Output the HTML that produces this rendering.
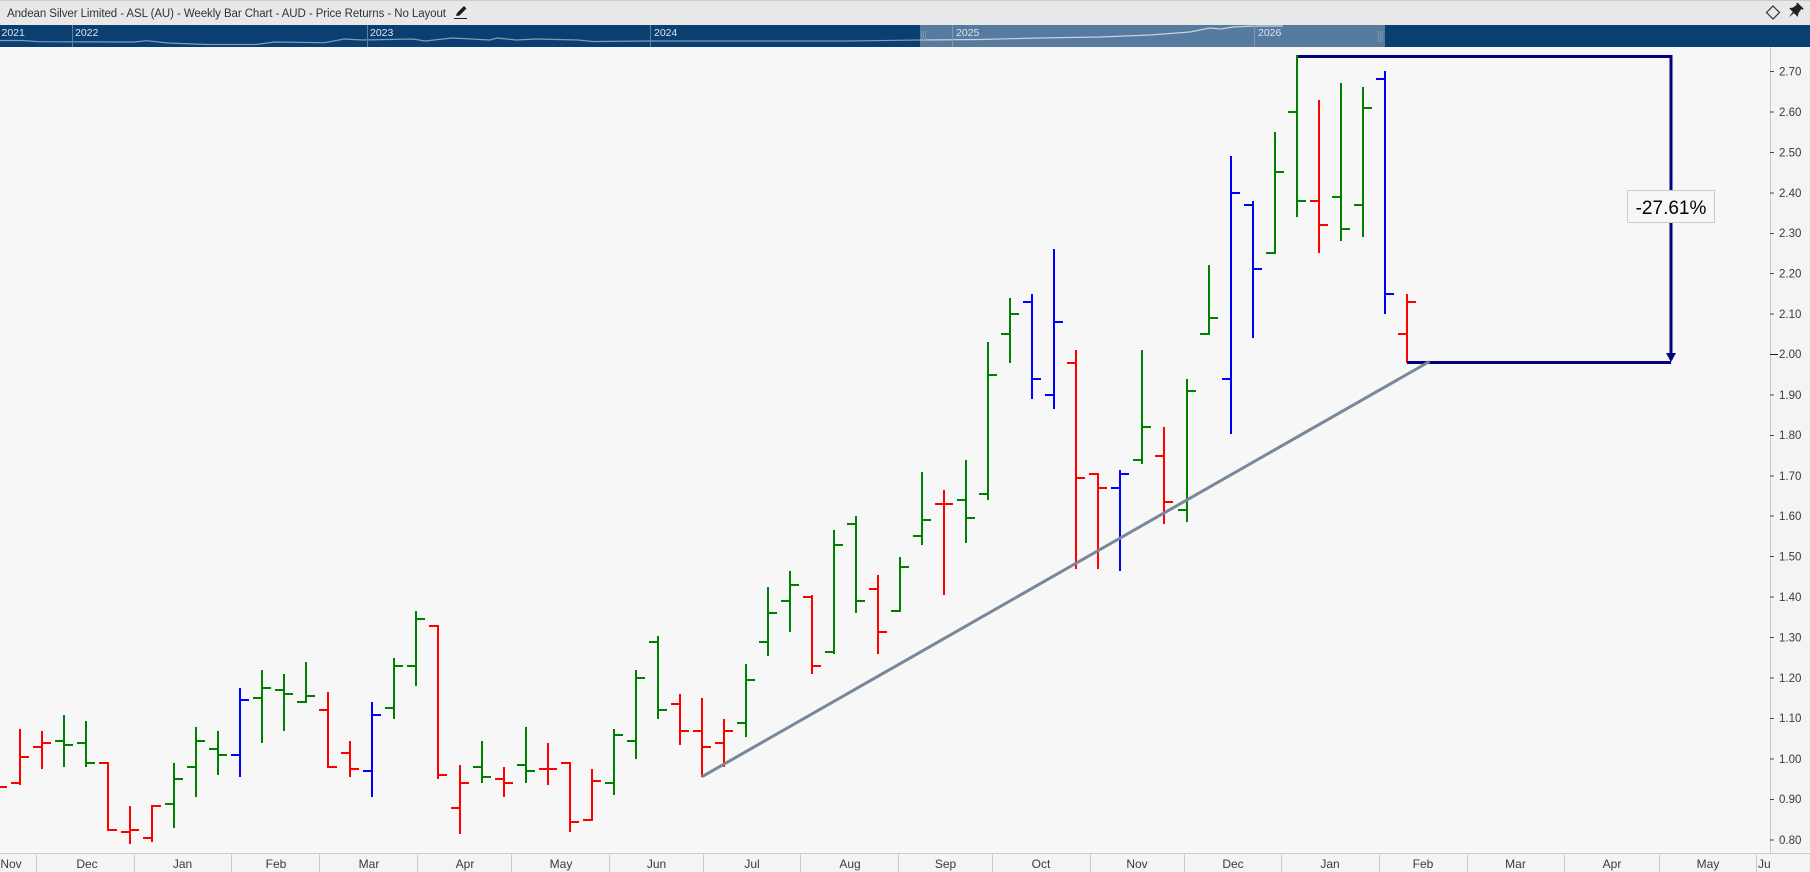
<!DOCTYPE html>
<html lang="en">
<head>
<meta charset="utf-8">
<title>Andean Silver Limited - ASL (AU) - Weekly Bar Chart</title>
<style>
html,body{margin:0;padding:0;width:1810px;height:872px;overflow:hidden;background:#f7f7f7}
svg{display:block}
text{font-family:"Liberation Sans",sans-serif}
.ax{font-size:11.5px;fill:#3a3a3a}
.mo{font-size:12px;fill:#3a3a3a;text-anchor:middle}
.yr{font-size:10.5px;fill:#dbe4ee}
</style>
</head>
<body>
<svg width="1810" height="872" viewBox="0 0 1810 872" xmlns="http://www.w3.org/2000/svg">
<rect width="1810" height="872" fill="#f7f7f7"/>
<!-- header -->
<rect width="1810" height="25" fill="#e8e8e8"/>
<rect width="1810" height="1" fill="#cccccc"/>
<text x="7" y="17" font-size="11.5" fill="#333333" textLength="439" lengthAdjust="spacing">Andean Silver Limited - ASL (AU) - Weekly Bar Chart - AUD - Price Returns - No Layout</text>
<path d="M456 16l1-3 7-7 2.5 2.5-7 7z" fill="#1c1c1c"/>
<rect x="454" y="18" width="13" height="1" fill="#1c1c1c"/>
<polygon points="1773,6 1779.5,12.5 1773,19 1766.5,12.5" fill="none" stroke="#333333" stroke-width="1.2"/>
<g transform="translate(1795 11) rotate(45) scale(1.1)" fill="#222222"><path d="M-4-7H4V-5.5H2.8L3.5-1 5.5 2H-5.5L-3.5-1-2.8-5.5H-4Z"/><path d="M-.8 2L0 8 .8 2Z"/></g>
<!-- navigator -->
<rect y="25" width="1810" height="22" fill="#0b3f72"/>
<rect x="920" y="25" width="465" height="22" fill="#567b9f"/>
<polyline fill="none" stroke="#7d9dbd" stroke-width="1.2" points="0,40.5 23,40.5 38,41.7 134,42 147,40.7 168,43 207,44.5 256,44.5 275,42 325,42.7 344,39 363,40 413,39 425,41 452,38 490,40 497,38 516,40 536,39 578,40 593,41.5 650,41 760,41 850,41 920,40"/>
<polyline fill="none" stroke="#c3d3e3" stroke-width="1.2" points="920,40 980,39.5 1040,38 1100,37 1150,35 1190,32 1210,28 1221,29 1233,27 1255,26 1283,26"/>
<g fill="#5d7f9f"><rect x="72" y="25" width="1" height="22"/><rect x="367" y="25" width="1" height="22"/><rect x="650" y="25" width="1" height="22"/></g>
<g fill="#7d9bb8"><rect x="952" y="25" width="1" height="22"/><rect x="1254" y="25" width="1" height="22"/></g>
<g fill="#7f8f9f"><rect x="921" y="31" width="1" height="11"/><rect x="923" y="31" width="1" height="11"/><rect x="925" y="31" width="1" height="11"/><rect x="1378" y="31" width="1" height="11"/><rect x="1380" y="31" width="1" height="11"/><rect x="1382" y="31" width="1" height="11"/></g>
<text class="yr" x="1.5" y="36">2021</text>
<text class="yr" x="75" y="36">2022</text>
<text class="yr" x="370" y="36">2023</text>
<text class="yr" x="654" y="36">2024</text>
<text class="yr" x="956" y="36">2025</text>
<text class="yr" x="1258" y="36">2026</text>
<!-- axes -->
<rect x="1770" y="47" width="40" height="825" fill="#f4f4f4"/>
<rect y="853" width="1810" height="19" fill="#f4f4f4"/>
<rect x="1770" y="47" width="1" height="806" fill="#c8c8c8"/>
<rect y="853" width="1810" height="1" fill="#cccccc"/>
<g fill="#cccccc">
<rect x="36" y="853" width="1" height="19"/><rect x="134" y="853" width="1" height="19"/><rect x="231" y="853" width="1" height="19"/><rect x="319" y="853" width="1" height="19"/><rect x="417" y="853" width="1" height="19"/><rect x="511" y="853" width="1" height="19"/><rect x="609" y="853" width="1" height="19"/><rect x="703" y="853" width="1" height="19"/><rect x="800" y="853" width="1" height="19"/><rect x="898" y="853" width="1" height="19"/><rect x="992" y="853" width="1" height="19"/><rect x="1090" y="853" width="1" height="19"/><rect x="1184" y="853" width="1" height="19"/><rect x="1281" y="853" width="1" height="19"/><rect x="1379" y="853" width="1" height="19"/><rect x="1467" y="853" width="1" height="19"/><rect x="1564" y="853" width="1" height="19"/><rect x="1659" y="853" width="1" height="19"/><rect x="1756" y="853" width="1" height="19"/>
</g>
<g>
<text class="mo" x="11" y="868">Nov</text><text class="mo" x="87" y="868">Dec</text><text class="mo" x="182.5" y="868">Jan</text><text class="mo" x="276" y="868">Feb</text><text class="mo" x="369" y="868">Mar</text><text class="mo" x="465" y="868">Apr</text><text class="mo" x="561" y="868">May</text><text class="mo" x="656.5" y="868">Jun</text><text class="mo" x="752" y="868">Jul</text><text class="mo" x="850" y="868">Aug</text><text class="mo" x="945.5" y="868">Sep</text><text class="mo" x="1041" y="868">Oct</text><text class="mo" x="1137" y="868">Nov</text><text class="mo" x="1233" y="868">Dec</text><text class="mo" x="1330" y="868">Jan</text><text class="mo" x="1423" y="868">Feb</text><text class="mo" x="1515.5" y="868">Mar</text><text class="mo" x="1612" y="868">Apr</text><text class="mo" x="1708" y="868">May</text>
</g>
<svg x="1757" y="853" width="13" height="19" viewBox="0 0 13 19"><text x="1" y="15" font-size="12" fill="#3a3a3a">Jun</text></svg>
<!-- y axis ticks -->
<path d="M1770 71.5h4M1770 112h4M1770 152.5h4M1770 193h4M1770 233.5h4M1770 273.5h4M1770 314h4M1770 395h4M1770 435.5h4M1770 476h4M1770 516h4M1770 556.5h4M1770 597h4M1770 637.5h4M1770 678h4M1770 718.5h4M1770 759h4M1770 799.5h4M1770 840h4" stroke="#444444" stroke-width="1" fill="none" shape-rendering="crispEdges"/>
<path d="M1770 354.5h8" stroke="#222222" stroke-width="1" shape-rendering="crispEdges"/>
<text class="ax" x="1779" y="75.5">2.70</text>
<text class="ax" x="1779" y="116">2.60</text>
<text class="ax" x="1779" y="156.5">2.50</text>
<text class="ax" x="1779" y="197">2.40</text>
<text class="ax" x="1779" y="237">2.30</text>
<text class="ax" x="1779" y="277.5">2.20</text>
<text class="ax" x="1779" y="318">2.10</text>
<text class="ax" x="1779" y="358">2.00</text>
<text class="ax" x="1779" y="399">1.90</text>
<text class="ax" x="1779" y="439">1.80</text>
<text class="ax" x="1779" y="480">1.70</text>
<text class="ax" x="1779" y="520">1.60</text>
<text class="ax" x="1779" y="560.5">1.50</text>
<text class="ax" x="1779" y="601">1.40</text>
<text class="ax" x="1779" y="641.5">1.30</text>
<text class="ax" x="1779" y="682">1.20</text>
<text class="ax" x="1779" y="722">1.10</text>
<text class="ax" x="1779" y="763">1.00</text>
<text class="ax" x="1779" y="803">0.90</text>
<text class="ax" x="1779" y="844">0.80</text>
<!-- bars -->
<g fill="none" stroke-width="2" shape-rendering="crispEdges">
<path stroke="#ff0000" d="M0 787H7
M20 729V785M11 783H20M20 757H29
M42 731V769M33 747H42M42 743H51
M108 762V831M99 763H108M108 830H117
M130 806V844M121 832H130M130 830H139
M152 805V842M143 838H152M152 806H161
M328 692V768M319 710H328M328 767H337
M350 741V777M341 753H350M350 769H359
M438 625V779M429 626H438M438 775H447
M460 765V834M451 808H460M460 783H469
M504 767V797M495 779H504M504 783H513
M548 743V785M539 769H548M548 769H557
M570 762V832M561 763H570M570 822H579
M592 769V821M583 820H592M592 781H601
M680 694V745M671 704H680M680 731H689
M702 698V777M693 731H702M702 747H711
M724 719V767M715 743H724M724 731H733
M812 595V674M803 597H812M812 666H821
M878 575V654M869 589H878M878 632H887
M944 490V595M935 504H944M944 504H953
M1076 350V569M1067 363H1076M1076 478H1085
M1098 473V569M1089 474H1098M1098 488H1107
M1164 427V524M1155 456H1164M1164 502H1173
M1319 100V253M1310 201H1319M1319 225H1328
M1407 294V363M1398 334H1407M1407 302H1416"/>
<path stroke="#008000" d="M64 715V767M55 741H64M64 745H73
M86 721V767M77 743H86M86 763H95
M174 763V828M165 804H174M174 779H183
M196 727V797M187 767H196M196 741H205
M218 731V775M209 749H218M218 755H227
M262 670V743M253 698H262M262 688H271
M284 674V731M275 690H284M284 694H293
M306 662V703M297 702H306M306 696H315
M394 658V719M385 708H394M394 666H403
M416 611V686M407 666H416M416 619H425
M482 741V783M473 767H482M482 777H491
M526 727V783M517 765H526M526 771H535
M614 729V795M605 783H614M614 735H623
M636 670V759M627 741H636M636 678H645
M658 636V719M649 642H658M658 710H667
M746 664V737M737 723H746M746 680H755
M768 587V656M759 642H768M768 613H777
M790 571V632M781 601H790M790 585H799
M834 530V654M825 652H834M834 545H843
M856 516V613M847 524H856M856 601H865
M900 557V612M891 611H900M900 567H909
M922 472V545M913 536H922M922 520H931
M966 460V543M957 500H966M966 518H975
M988 342V500M979 494H988M988 375H997
M1010 298V363M1001 334H1010M1010 314H1019
M1142 350V464M1133 460H1142M1142 427H1151
M1187 379V522M1178 510H1187M1187 391H1196
M1209 265V335M1200 334H1209M1209 318H1218
M1275 132V254M1266 253H1275M1275 172H1284
M1297 55V217M1288 112H1297M1297 201H1306
M1341 83V241M1332 197H1341M1341 229H1350
M1363 87V237M1354 205H1363M1363 108H1372"/>
<path stroke="#0000ff" d="M240 688V777M231 755H240M240 700H249
M372 702V797M363 771H372M372 715H381
M1032 294V399M1023 302H1032M1032 379H1041
M1054 249V409M1045 395H1054M1054 322H1063
M1120 470V571M1111 488H1120M1120 474H1129
M1231 156V434M1222 379H1231M1231 193H1240
M1253 201V338M1244 205H1253M1253 269H1262
M1385 71V314M1376 79H1385M1385 294H1394"/>
</g>
<!-- measure tool -->
<path d="M1298 56.5H1671V360M1407 362.5H1671" fill="none" stroke="#000080" stroke-width="3" shape-rendering="crispEdges"/>
<polygon points="1666,353 1676,353 1671,362" fill="#000080"/>
<!-- trend line -->
<line x1="702" y1="776.7" x2="1429.5" y2="361.5" stroke="#778899" stroke-width="3"/>
<!-- label -->
<rect x="1627.5" y="190.5" width="87" height="32" fill="#f7f7f7" stroke="#cccccc" stroke-width="1"/>
<text x="1671" y="214" font-size="19" fill="#000000" text-anchor="middle">-27.61%</text>
</svg>
</body>
</html>
